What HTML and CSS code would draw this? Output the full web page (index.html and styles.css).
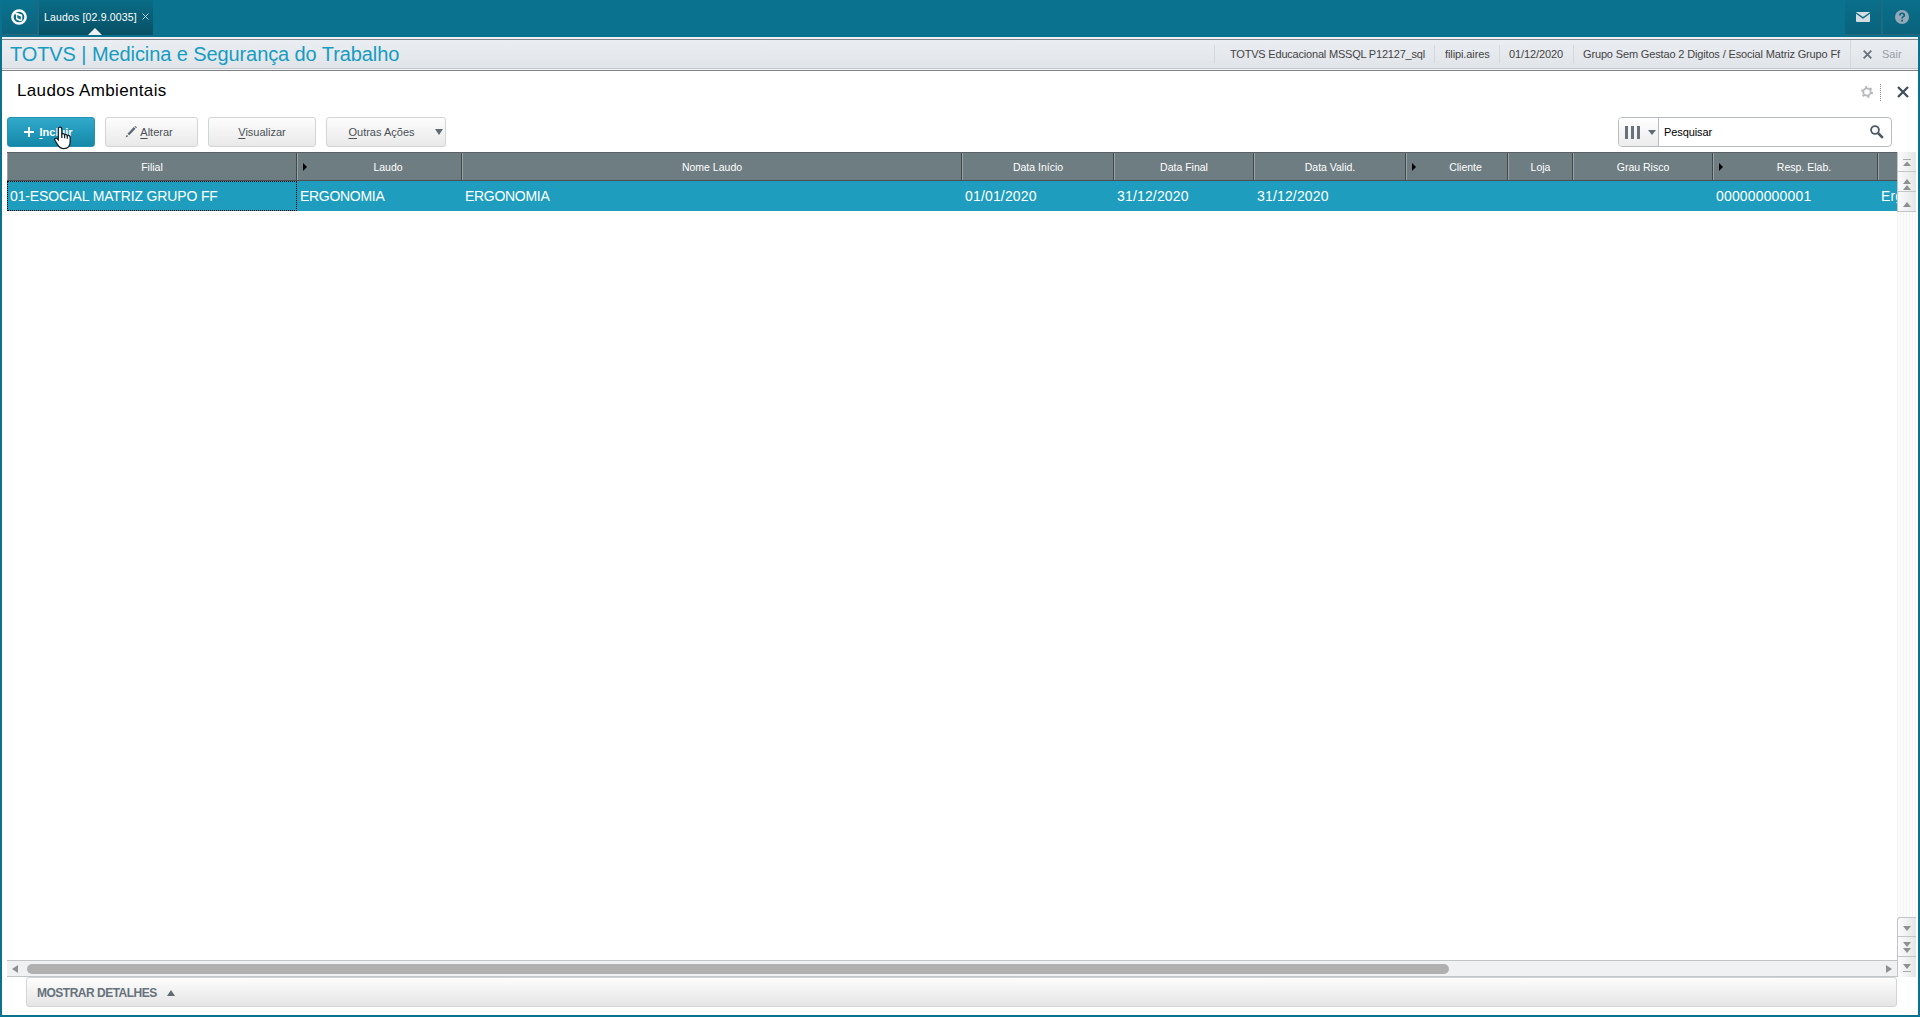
FILE: index.html
```html
<!DOCTYPE html>
<html lang="pt-BR">
<head>
    <meta charset="UTF-8">
    <title>Laudos Ambientais</title>
    <link rel="stylesheet" href="styles.css">
</head>
<body>
    <div class="topbar">
        <div class="top-logo">
            <svg width="16" height="16" viewBox="0 0 16 16"><circle cx="8" cy="8" r="6.6" fill="none" stroke="#fff" stroke-width="2.5"/><path d="M1.800 5 6 3.800l5.300 2v5.700L9 12.300 5 10.200V5.500z" fill="#fff"/><path d="M6.300 6 9.800 7.500v3.200L6.300 9z" fill="#0a728f"/></svg>
        </div>
        <div class="tab">
            <span class="tab-name">Laudos [02.9.0035]</span>
            <svg class="tab-close" width="7" height="7" viewBox="0 0 7 7"><path d="M.5.5l6 6M6.500.5l-6 6" stroke="#b5ccd3"/></svg>
            <span class="tab-arrow"></span>
        </div>
        <div class="top-icons">
            <div class="top-icon">
                <svg width="14" height="10" viewBox="0 0 14 10"><rect width="14" height="10" rx="1" fill="#d5dde3"/><path d="M0 1l7 4.8L14 1" fill="none" stroke="#0a6a85" stroke-width="1.4"/></svg>
            </div>
            <div class="top-icon">
                <svg width="14" height="14" viewBox="0 0 14 14"><circle cx="7" cy="7" r="7" fill="#94a9b8"/><path d="M4.8 5.5C4.8 2.5 9.3 2.6 9.3 5.2 9.3 6.8 7.1 6.6 7.1 8.6" fill="none" stroke="#0a6680" stroke-width="1.7"/><rect x="6.2" y="9.7" width="1.8" height="1.8" fill="#0a6680"/></svg>
            </div>
        </div>
    </div>

    <div class="window">
        <div class="header">
            <h1 class="title">TOTVS | Medicina e Segurança do Trabalho</h1>
            <div class="info env">TOTVS Educacional MSSQL P12127_sql</div>
            <div class="info user">filipi.aires</div>
            <div class="info date">01/12/2020</div>
            <div class="info group">Grupo Sem Gestao 2 Digitos / Esocial Matriz Grupo Ff</div>
            <div class="exit">
                <svg width="9" height="9" viewBox="0 0 9 9"><path d="M.7.7l7.6 7.6M8.3.7L.7 8.3" stroke="#6a747e" stroke-width="1.9"/></svg>
                <span>Sair</span>
            </div>
        </div>

        <div class="page-head">
            <h2 class="page-title">Laudos Ambientais</h2>
            <svg class="gear" width="12" height="12" viewBox="0 0 12 12"><circle cx="6" cy="6" r="3.7" fill="none" stroke="#b5b9bc" stroke-width="1.8"/><circle cx="6" cy="6" r="5.1" fill="none" stroke="#b5b9bc" stroke-width="1.8" stroke-dasharray="2.1 3.24"/></svg>
            <span class="dots"></span>
            <svg class="close" width="12" height="12" viewBox="0 0 12 12"><path d="M1 1l10 10M11 1L1 11" stroke="#414f5c" stroke-width="2.3"/></svg>
        </div>

        <div class="toolbar">
            <button class="btn primary">
                <svg width="10" height="10" viewBox="0 0 10 10"><path d="M5 0v10M0 5h10" stroke="#fff" stroke-width="2"/></svg>
                <span><u>I</u>ncluir</span>
                <svg class="cursor" width="18" height="24" viewBox="0 0 18 24"><path d="M6 1.200c1.200 0 1.800.8 1.800 1.800v5c.7-.7 2.300-.5 2.800.7.9-.5 2.200-.2 2.600.9 1.400-.5 3 .1 3 1.900v4.300c0 4-1.900 6.900-6.300 6.900-3.500 0-5-1.700-6.500-4.300L.9 14.300c-.8-1.500 1-2.900 2.200-1.700L4.300 13.900V3c0-1 .6-1.800 1.700-1.800z" fill="#fff" stroke="#15222a" stroke-width="1.300"/><path d="M7.800 8v4M10.600 9v3.300M13.300 10v2.800" stroke="#15222a" stroke-width="1.300"/></svg>
            </button>
            <button class="btn edit">
                <svg width="12" height="12" viewBox="0 0 12 12"><path d="M2.500 7.800 8.800 1l1.700 1.700L4.200 9.300zM1.800 8.700l1.500 1.500L.5 11.500z" fill="#5d6972"/><path d="M9.400.5l.6-.5L12 1.300l-.9 1z" fill="#5d6972"/></svg>
                <span><u>A</u>lterar</span>
            </button>
            <button class="btn view"><span><u>V</u>isualizar</span></button>
            <button class="btn more"><span><u>O</u>utras Ações</span><i class="down"></i></button>
            <div class="search">
                <div class="search-cols">
                    <span class="bars"></span>
                    <i class="down"></i>
                </div>
                <span class="search-text">Pesquisar</span>
                <svg class="lens" width="14" height="14" viewBox="0 0 14 14"><circle cx="5" cy="5" r="3.900" fill="none" stroke="#4c5964" stroke-width="1.800"/><path d="M8 8l4.800 4.800" stroke="#4c5964" stroke-width="2.500"/></svg>
            </div>
        </div>

        <div class="grid-area">
            <div class="grid-main">
                <div class="grid-row grid-head">
                    <div>Filial</div>
                    <div class="indexed">Laudo</div>
                    <div>Nome Laudo</div>
                    <div>Data Início</div>
                    <div>Data Final</div>
                    <div>Data Valid.</div>
                    <div class="indexed">Cliente</div>
                    <div>Loja</div>
                    <div>Grau Risco</div>
                    <div class="indexed">Resp. Elab.</div>
                    <div></div>
                </div>
                <div class="grid-row grid-line">
                    <div class="focused">01-ESOCIAL MATRIZ GRUPO FF</div>
                    <div class="name">ERGONOMIA</div>
                    <div class="name">ERGONOMIA</div>
                    <div>01/01/2020</div>
                    <div>31/12/2020</div>
                    <div>31/12/2020</div>
                    <div></div>
                    <div></div>
                    <div></div>
                    <div>000000000001</div>
                    <div>Erg</div>
                </div>
                <div class="hscroll">
                    <i class="left"></i>
                    <span class="thumb"></span>
                    <i class="right"></i>
                </div>
            </div>
            <div class="vscroll">
                <div class="vbtn"><svg width="8" height="7" viewBox="0 0 8 7"><path d="M0 .5h8" stroke="#a9abad"/><path d="M0 7l4-4.500L8 7z" fill="#8e9092"/></svg></div>
                <div class="vbtn low"><svg width="8" height="11" viewBox="0 0 8 11"><path d="M0 5l4-5 4 5zM0 11l4-5 4 5z" fill="#8e9092"/></svg></div>
                <div class="vbtn low"><svg width="8" height="5" viewBox="0 0 8 5"><path d="M0 5l4-5 4 5z" fill="#8e9092"/></svg></div>
                <div class="vtrack"></div>
                <div class="vbtn first"><svg width="8" height="5" viewBox="0 0 8 5"><path d="M0 0l4 5 4-5z" fill="#8e9092"/></svg></div>
                <div class="vbtn"><svg width="8" height="11" viewBox="0 0 8 11"><path d="M0 0l4 5 4-5zM0 6l4 5 4-5z" fill="#8e9092"/></svg></div>
                <div class="vbtn last"><svg width="8" height="8" viewBox="0 0 8 8"><path d="M0 0l4 5 4-5z" fill="#8e9092"/><path d="M0 7.500h8" stroke="#a9abad"/></svg></div>
            </div>
        </div>

        <div class="details"><span>MOSTRAR DETALHES</span><i class="up"></i></div>
    </div>
</body>
</html>
```

FILE: styles.css
```css
* {
    box-sizing: border-box;
}

body {
    margin: 0;
    height: 1017px;
    padding: 0 2px 2px;
    overflow: hidden;
    display: flex;
    flex-direction: column;
    background: #0a728f;
    color: #000;
    font-family: "Liberation Sans", Arial, sans-serif;
    font-size: 11px;
}

svg {
    display: block;
    flex: none;
}

/* Top bar */
.topbar {
    height: 37px;
    flex: none;
    display: flex;
    align-items: flex-start;
}

.top-logo {
    width: 36px;
    height: 35px;
    padding: 9px 0 0 9px;
    border-right: 1px solid #2c6475;
    border-bottom: 1px solid #2c6475;
    background: linear-gradient(#0a728f, #0a647e);
}

.tab {
    position: relative;
    width: 114px;
    height: 35px;
    margin-left: 1px;
    padding: 0 4px 2px 5px;
    display: flex;
    align-items: center;
    justify-content: space-between;
    background: linear-gradient(#0a6c87, #075064);
    color: #fff;
    white-space: nowrap;
}

.tab-name {
    font-size: 10.5px;
    letter-spacing: 0.16px;
}

.tab-arrow {
    position: absolute;
    left: 49px;
    bottom: 0;
    border: 7px solid transparent;
    border-top: 0;
    border-bottom-color: #edf0f3;
}

.top-icons {
    display: flex;
    gap: 1px;
    margin: 0 -2px 0 auto;
}

.top-icon {
    width: 37px;
    height: 35px;
    display: flex;
    align-items: center;
    justify-content: center;
    border-right: 1px solid #2c6475;
    border-bottom: 1px solid #2c6475;
    background: linear-gradient(#0a6f8b, #0a637c);
}

.top-icon:last-child {
    border-right: 0;
}

.window {
    flex: 1;
    min-height: 0;
    display: flex;
    flex-direction: column;
    background: #fff;
}

/* Program header */
.header {
    height: 34px;
    flex: none;
    display: flex;
    align-items: center;
    padding-bottom: 1px;
    border-top: 2px solid #edf1f4;
    border-bottom: 1px solid #808387;
    background: linear-gradient(#808387 1px, #eaedf1 1px, #e1e5ea 29px, #c4c8ce 29px, #c4c8ce 30px, #f4f5f7 30px);
    color: #444;
    white-space: nowrap;
}

.title {
    margin: 0 auto 0 8px;
    font-size: 20px;
    font-weight: normal;
    letter-spacing: -0.09px;
    color: #169cc1;
}

.info,
.exit {
    height: 18px;
    line-height: 18px;
    border-left: 1px solid #d4d8dc;
}

.env {
    width: 220px;
    padding-left: 15px;
    letter-spacing: -0.2px;
}

.user {
    width: 65px;
    padding-left: 10px;
    letter-spacing: -0.1px;
}

.date {
    width: 74px;
    padding-left: 9px;
    letter-spacing: -0.1px;
}

.group {
    width: 277px;
    padding-left: 9px;
    letter-spacing: -0.15px;
}

.exit {
    width: 68px;
    height: 28px;
    padding-left: 12px;
    display: flex;
    align-items: center;
    gap: 10px;
    color: #9a9fa5;
}

.page-head {
    height: 46px;
    flex: none;
    display: flex;
    align-items: center;
    padding: 0 9px 4px 15px;
}

.page-title {
    margin: -2px auto 0 0;
    font-size: 17px;
    font-weight: normal;
    letter-spacing: 0.35px;
}

.dots {
    height: 17px;
    margin: 0 16px 0 7px;
    border-left: 1px dotted #888;
}

/* Action buttons and search */
.toolbar {
    height: 35px;
    flex: none;
    display: flex;
    align-items: flex-start;
    padding: 0 26px 0 5px;
}

.btn {
    position: relative;
    height: 30px;
    margin: 0 10px 0 0;
    padding: 0;
    display: flex;
    align-items: center;
    justify-content: center;
    border: 1px solid #d2d4d6;
    border-radius: 3px;
    background: linear-gradient(#fdfdfd, #e9e9e9);
    color: #4a5056;
    font: 11px "Liberation Sans", Arial, sans-serif;
}

.btn u {
    text-underline-offset: 2px;
}

.primary {
    width: 88px;
    gap: 5px;
    padding-right: 5px;
    border-color: #2592b0;
    background: linear-gradient(#31a9cb, #1488a9);
    color: #fff;
    font-weight: bold;
}

.cursor {
    position: absolute;
    left: 46px;
    top: 8px;
}

.edit {
    width: 93px;
    gap: 3px;
    padding-right: 5px;
}

.view {
    width: 108px;
}

.more {
    width: 120px;
    padding-right: 9px;
}

.more .down {
    position: absolute;
    right: 2px;
    top: 11px;
}

.down,
.up,
.left,
.right {
    width: 0;
    height: 0;
    flex: none;
    border: 4px solid transparent;
}

.down {
    border-top: 6px solid #5f6b75;
    border-bottom: 0;
}

.up {
    border-bottom: 6px solid #5f6b75;
    border-top: 0;
}

.left {
    border-right: 6px solid #8e9092;
    border-left: 0;
}

.right {
    border-left: 6px solid #8e9092;
    border-right: 0;
}

.search {
    width: 274px;
    height: 30px;
    margin-left: auto;
    display: flex;
    align-items: center;
    border: 1px solid #b9bcbf;
    border-radius: 4px;
    background: #fff;
}

.search-cols {
    width: 40px;
    height: 28px;
    display: flex;
    align-items: center;
    justify-content: space-between;
    padding: 0 2px 0 6px;
    border-right: 1px solid #b9bcbf;
    border-radius: 3px 0 0 3px;
    background: linear-gradient(#fff, #ececec);
}

.search-cols .down {
    border-top-width: 5px;
}

.bars {
    width: 15px;
    height: 13px;
    background: repeating-linear-gradient(90deg, #66727c 0 3px, transparent 3px 6px);
}

.search-text {
    margin: 0 auto 0 5px;
    letter-spacing: -0.1px;
}

.lens {
    margin-right: 7px;
}

/* Browse grid */
.grid-area {
    height: 825px;
    flex: none;
    display: flex;
    padding-left: 5px;
}

.grid-main {
    width: 1890px;
    display: flex;
    flex-direction: column;
    overflow: hidden;
}

.grid-row {
    display: grid;
    grid-template-columns: 290px 165px 500px 152px 140px 152px 102px 65px 140px 165px 19px;
    align-items: center;
    white-space: nowrap;
}

.grid-head {
    height: 29px;
    border-top: 1px solid #596166;
    border-bottom: 1px solid #4b4f52;
    background: #6e7d82;
    color: #fff;
    font-size: 10.5px;
    text-align: center;
}

.grid-head div {
    position: relative;
    height: 27px;
    line-height: 28px;
    border-left: 1px solid #98a3a6;
    border-right: 1px solid #44484c;
}

.grid-head div:last-child {
    border-right: 0;
}

.grid-head .indexed {
    padding-left: 17px;
}

.indexed::before {
    content: "";
    position: absolute;
    left: 5px;
    top: 10px;
    border: 4px solid transparent;
    border-left-color: #000;
    border-right: 0;
}

.grid-line {
    height: 30px;
    background: #1e9dbf;
    color: #fff;
    font-size: 14px;
    letter-spacing: 0.16px;
}

.grid-line div {
    height: 30px;
    padding-left: 3px;
    line-height: 30px;
    overflow: hidden;
}

.grid-line .name {
    letter-spacing: -0.3px;
}

.grid-line .focused {
    padding-left: 2px;
    line-height: 28px;
    letter-spacing: -0.15px;
    border: 1px dotted #000;
}

.hscroll {
    height: 17px;
    margin-top: auto;
    display: flex;
    align-items: center;
    padding: 0 5px;
    border-top: 1px solid #c2c5c8;
    border-bottom: 1px solid #c2c5c8;
    background: #eff1f3;
}

.thumb {
    width: 1422px;
    height: 10px;
    margin: 0 auto 0 9px;
    border-radius: 5px;
    background: #b0b0b0;
}

.vscroll {
    width: 19px;
    display: flex;
    flex-direction: column;
}

.vbtn {
    height: 20px;
    flex: none;
    display: flex;
    align-items: center;
    justify-content: center;
    padding-top: 2px;
    border-left: 1px solid #c2c5c8;
    border-bottom: 1px solid #c2c5c8;
    background: linear-gradient(90deg, #fbfbfc, #e4e6e9);
}

.vbtn.low {
    padding-top: 5px;
}

.vbtn.first {
    border-top: 1px solid #c2c5c8;
    border-radius: 3px 0 0;
}

.vbtn.last {
    border-bottom: 0;
}

.vtrack {
    flex: 1;
    background: repeating-linear-gradient(90deg, #f5f5f5 0 1px, #fbfbfb 1px 3px);
}

.details {
    width: 1871px;
    height: 30px;
    margin-left: 24px;
    padding: 2px 0 0 10px;
    display: flex;
    align-items: center;
    gap: 10px;
    border: 1px solid #d2d4d6;
    border-radius: 3px;
    background: linear-gradient(#fdfdfd, #e5e5e5);
    color: #66717b;
    font-size: 12px;
    font-weight: bold;
    letter-spacing: -0.5px;
}
```
